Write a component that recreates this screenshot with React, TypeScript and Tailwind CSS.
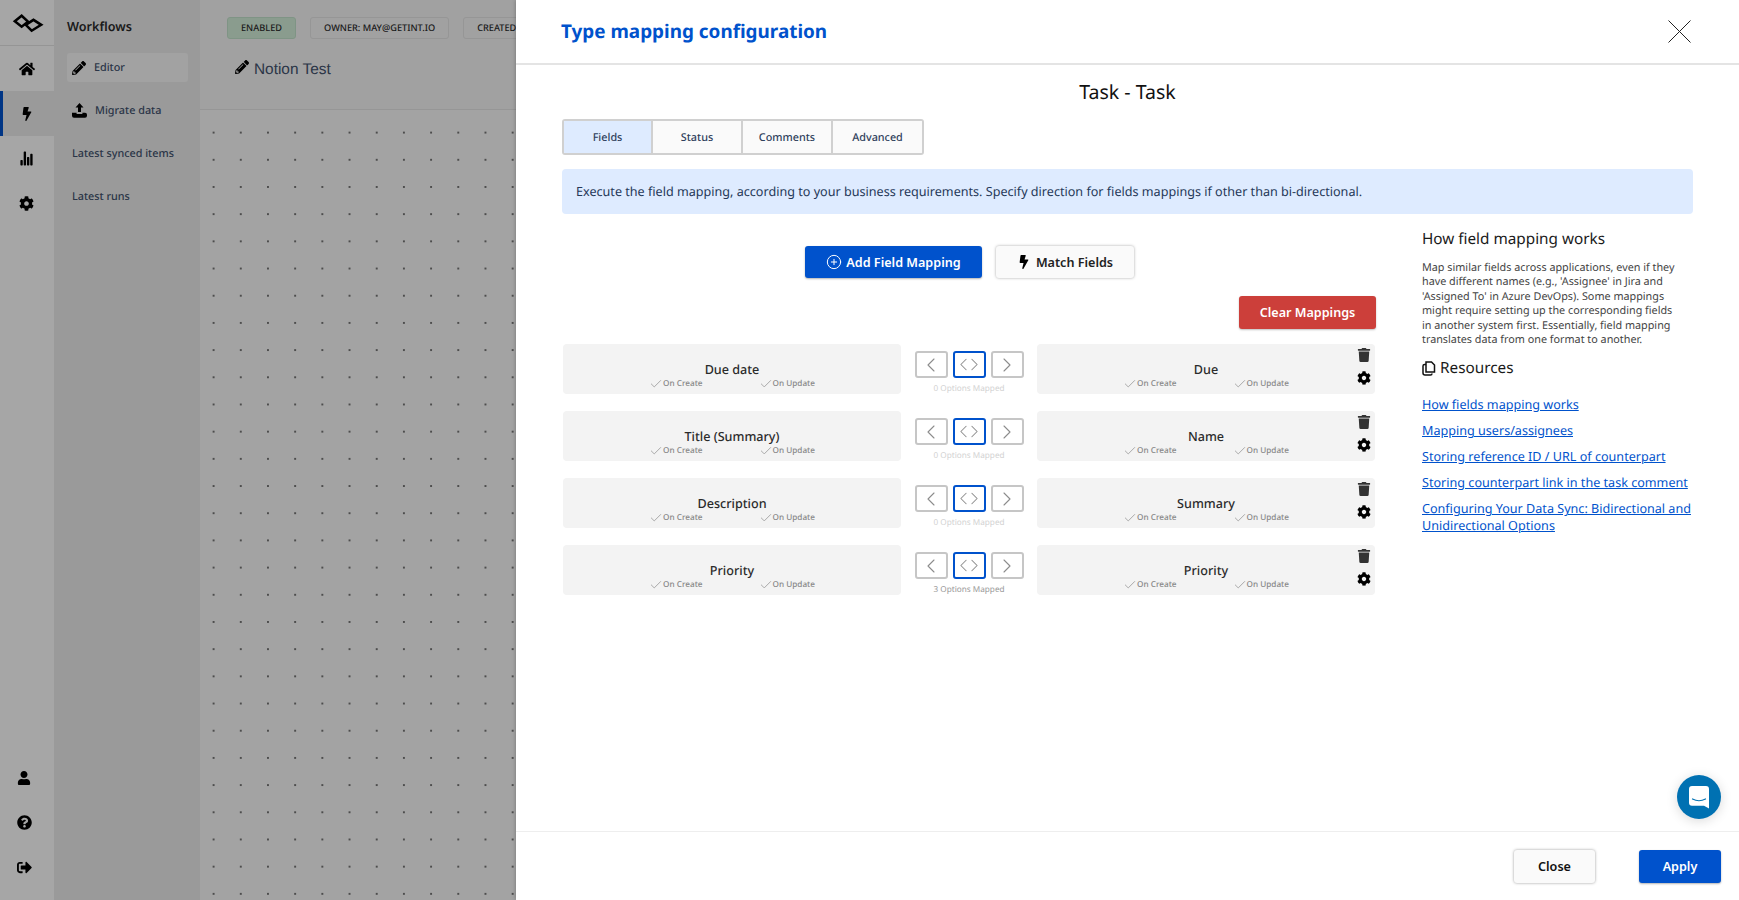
import React from "react";
import { Check, ChevronLeft, ChevronRight, PlusCircle } from "lucide-react";
import { FaBolt, FaCog, FaHome, FaPencilAlt, FaQuestionCircle, FaSignOutAlt, FaTrash, FaUser } from "react-icons/fa";
import { IoStatsChart } from "react-icons/io5";

const rows = [
  { left: "Due date", right: "Due", mapped: "0 Options Mapped", active: false },
  { left: "Title (Summary)", right: "Name", mapped: "0 Options Mapped", active: false },
  { left: "Description", right: "Summary", mapped: "0 Options Mapped", active: false },
  { left: "Priority", right: "Priority", mapped: "3 Options Mapped", active: true },
];

const links = [
  "How fields mapping works",
  "Mapping users/assignees",
  "Storing reference ID / URL of counterpart",
  "Storing counterpart link in the task comment",
  "Configuring Your Data Sync: Bidirectional and Unidirectional Options",
];

function Logo() {
  return (
    <svg width="32" height="20" viewBox="0 0 34 22" fill="none" stroke="#000" strokeWidth="2.8" strokeLinejoin="miter">
      <path d="M2.5 9 L10 3 L17 9.5 L10 15 Z" />
      <path d="M14.5 13 L23 7.5 L31.5 13 L21 19.5 Z" />
    </svg>
  );
}

function UploadTray() {
  return (
    <svg width="15" height="15" viewBox="0 0 15 15" fill="#000">
      <path d="M7.5 0 L11.5 4.4 H9 V9 H6 V4.4 H3.5 Z" />
      <path d="M0 9.8 H4.6 V11 H10.4 V9.8 H13 A2 2 0 0 1 15 11.8 V12.8 A2 2 0 0 1 13 14.8 H2 A2 2 0 0 1 0 12.8 V11.8 A2 2 0 0 1 0 9.8 Z" />
    </svg>
  );
}

function ResourcesIcon() {
  return (
    <svg width="14" height="15" viewBox="0 0 14 15" fill="none" stroke="#111" strokeWidth="1.5">
      <path d="M4 1 H9.5 L12.5 4 V11 H4 Z" />
      <path d="M4 3.5 H2.6 A1.6 1.6 0 0 0 1 5.1 V12 A2 2 0 0 0 3 14 H8.5 A1.6 1.6 0 0 0 10 12.4" />
    </svg>
  );
}

function ChatIcon() {
  return (
    <svg width="20" height="23" viewBox="0 0 20 23">
      <path d="M3 0 H17 A3 3 0 0 1 20 3 V22.5 L15 19.8 H3 A3 3 0 0 1 0 16.8 V3 A3 3 0 0 1 3 0 Z" fill="#fff" />
      <path d="M3.5 13 Q10 16.5 16.5 13" stroke="#0071b2" strokeWidth="1.2" fill="none" strokeLinecap="round" />
    </svg>
  );
}

function Checks() {
  return (
    <div className="flex justify-center gap-[56px] text-[8.2px] leading-[11px] font-medium text-[#888]">
      {["On Create", "On Update"].map((t) => (
        <span key={t} className="flex items-center">
          <Check size={14} strokeWidth={1.7} className="-my-[2px] text-[#a8a8a8]" />
          {t}
        </span>
      ))}
    </div>
  );
}

function FieldCard({ name, actions }: { name: string; actions?: boolean }) {
  return (
    <div className="relative h-[50px] w-[338px] rounded-[4px] bg-[#f3f3f3] pt-[18px]">
      <div className="text-center text-[12.6px] leading-[16px] font-medium text-[#2b2b2b]">{name}</div>
      <Checks />
      {actions && (
        <div className="absolute top-[4px] right-[4px] flex flex-col items-center gap-[9px]">
          <FaTrash size={14} className="text-[#333]" />
          <FaCog size={14} className="text-black" />
        </div>
      )}
    </div>
  );
}

function DirButton({ active, children }: { active?: boolean; children: React.ReactNode }) {
  return (
    <div
      className={`flex h-[27px] w-[33px] items-center justify-center rounded-[3px] border-2 bg-white text-[#8c8c8c] ${
        active ? "border-[#0052cc]" : "border-[#c6c6c6]"
      }`}
    >
      {children}
    </div>
  );
}

function Row({ left, right, mapped, active }: (typeof rows)[number]) {
  return (
    <div className="flex items-start">
      <FieldCard name={left} />
      <div className="flex w-[136px] flex-col items-center pt-[7px]">
        <div className="flex gap-[5px]">
          <DirButton>
            <ChevronLeft size={24} strokeWidth={1.1} className="shrink-0" />
          </DirButton>
          <DirButton active>
            <span className="flex">
              <ChevronLeft size={21} strokeWidth={1.2} className="-mr-[5px] shrink-0" />
              <ChevronRight size={21} strokeWidth={1.2} className="-ml-[5px] shrink-0" />
            </span>
          </DirButton>
          <DirButton>
            <ChevronRight size={24} strokeWidth={1.1} className="shrink-0" />
          </DirButton>
        </div>
        <div className={`mt-[5px] text-[8.2px] leading-[11px] ${active ? "text-[#999]" : "text-[#d2d2d2]"}`}>{mapped}</div>
      </div>
      <FieldCard name={right} actions />
    </div>
  );
}

function RailItem({ children, active }: { children: React.ReactNode; active?: boolean }) {
  return (
    <div
      className={`flex h-[45px] items-center justify-center border-l-[3px] pr-[4px] ${
        active ? "border-[#0052cc] bg-[#ededed]" : "border-transparent"
      }`}
    >
      {children}
    </div>
  );
}

export default function App() {
  return (
    <div className="relative flex h-[900px] w-full overflow-hidden bg-white font-['Noto_Sans',sans-serif] [text-rendering:geometricPrecision]">
      {/* rail */}
      <div className="flex w-[54px] shrink-0 flex-col justify-between bg-white">
        <div>
          <div className="flex h-[46px] items-center justify-center border-b border-[#e5e5e5] pl-[1px]">
            <Logo />
          </div>
          <RailItem>
            <FaHome size={16} />
          </RailItem>
          <RailItem active>
            <FaBolt size={14} />
          </RailItem>
          <RailItem>
            <IoStatsChart size={15} />
          </RailItem>
          <RailItem>
            <FaCog size={15} />
          </RailItem>
        </div>
        <div className="flex flex-col items-center pr-[6px] pb-[10px]">
          <div className="flex h-[45px] items-center">
            <FaUser size={14} />
          </div>
          <div className="flex h-[45px] items-center">
            <FaQuestionCircle size={15} />
          </div>
          <div className="flex h-[45px] items-center">
            <FaSignOutAlt size={15} />
          </div>
        </div>
      </div>

      {/* sidebar */}
      <div className="flex w-[146px] shrink-0 flex-col bg-[#ededed] pt-[17px] pl-[13px]">
        <div className="text-[12.6px] leading-[20px] font-semibold text-[#2a2a2a]">Workflows</div>
        <div className="mt-[16px] flex h-[29px] w-[121px] items-center gap-[8px] rounded-[3px] bg-[#f9f9f9] pl-[5px] text-[10.8px] font-medium text-[#42526e]">
          <FaPencilAlt size={14} className="text-black" />
          <span className="pt-[2px]">Editor</span>
        </div>
        <div className="mt-[14px] flex h-[29px] items-center gap-[8px] pl-[5px] text-[10.8px] font-medium text-[#42526e]">
          <UploadTray />
          <span className="pt-[2px]">Migrate data</span>
        </div>
        <div className="mt-[14px] flex h-[29px] items-center pt-[2px] pl-[5px] text-[10.8px] font-medium text-[#42526e]">Latest synced items</div>
        <div className="mt-[14px] flex h-[29px] items-center pt-[2px] pl-[5px] text-[10.8px] font-medium text-[#42526e]">Latest runs</div>
      </div>

      {/* canvas */}
      <div className="flex min-w-0 flex-1 flex-col">
        <div className="h-[110px] shrink-0 border-b border-[#e6e6e6] bg-[#f7f7f7] pt-[17px] pl-[27px]">
          <div className="flex gap-[14px] text-[9.2px] leading-[20px] font-medium whitespace-nowrap text-[#2b2b2b]">
            <span className="rounded-[3px] border border-[#c4e4cc] bg-[#d5f0db] px-[13px]">ENABLED</span>
            <span className="rounded-[3px] border border-[#e6e6e6] px-[13px]">OWNER: MAY@GETINT.IO</span>
            <span className="rounded-[3px] border border-[#e6e6e6] px-[13px]">CREATED: 2024-03-11</span>
          </div>
          <div className="mt-[19px] ml-[8px] flex items-center gap-[5px] font-['Liberation_Sans',sans-serif] text-[15.4px] text-[#42526e]">
            <FaPencilAlt size={14} className="-mt-[5px] text-black" />
            Notion Test
          </div>
        </div>
        <div className="flex-1 bg-[#fbfbfb] bg-[radial-gradient(circle,#777_0.7px,transparent_1px)] bg-[size:27.2px_27.2px] bg-[position:0px_9px]" />
      </div>

      {/* dim overlay */}
      <div className="absolute inset-0 bg-black/35" />

      {/* modal */}
      <div className="absolute top-0 right-0 bottom-0 flex w-[1223px] flex-col bg-white text-black shadow-[0_0_4px_rgba(0,0,0,0.3)]">
        <div className="flex h-[65px] shrink-0 items-center justify-between border-b-2 border-[#e4e4e4] pr-[48px] pl-[45px]">
          <div className="text-[18.9px] font-bold text-[#0052cc]">Type mapping configuration</div>
          <svg width="23" height="23" viewBox="0 0 23 23" stroke="#222" strokeWidth="1">
            <path d="M0.5 0.5 L22.5 22.5 M22.5 0.5 L0.5 22.5" />
          </svg>
        </div>

        <div className="flex min-h-0 flex-1 flex-col pr-[46px] pl-[46px]">
          <div className="mt-[13px] text-center text-[19.5px] leading-[28px] text-[#111]">Task - Task</div>
          <div className="mt-[13px] flex h-[36px] w-fit overflow-hidden rounded-[3px] border-2 border-[#d0d0d0] text-[10.8px] font-medium text-[#2f3f5c]">
            <div className="flex w-[87px] items-center justify-center bg-[#deebff] pt-[2px]">Fields</div>
            <div className="flex w-[90px] items-center justify-center border-l-2 border-[#d0d0d0] bg-[#fafafa] pt-[2px]">Status</div>
            <div className="flex w-[90px] items-center justify-center border-l-2 border-[#d0d0d0] bg-[#fafafa] pt-[2px]">Comments</div>
            <div className="flex w-[91px] items-center justify-center border-l-2 border-[#d0d0d0] bg-[#fafafa] pt-[2px]">Advanced</div>
          </div>
          <div className="mt-[14px] flex h-[45px] items-center rounded-[4px] bg-[#deebff] pt-[1px] pl-[14px] text-[12.6px] text-[#253858]">
            Execute the field mapping, according to your business requirements. Specify direction for fields mappings if other than bi-directional.
          </div>

          <div className="flex gap-[46px]">
            <div className="w-[814px] shrink-0 pl-[1px]">
              <div className="mt-[32px] flex justify-center gap-[14px]">
                <button className="flex h-[32px] w-[177px] items-center justify-center gap-[4px] rounded-[3px] bg-[#0052cc] text-[12.6px] font-semibold text-white shadow-[0_1px_2px_rgba(0,0,0,0.3)]">
                  <PlusCircle size={16} strokeWidth={1.5} />
                  <span className="pt-[2px]">Add Field Mapping</span>
                </button>
                <button className="flex h-[32px] w-[138px] items-center justify-center gap-[5px] rounded-[3px] bg-[#fafafa] text-[12.6px] font-semibold text-[#222] shadow-[0_0_3px_rgba(0,0,0,0.35)]">
                  <FaBolt size={14} className="text-black" />
                  <span className="pt-[2px]">Match Fields</span>
                </button>
              </div>
              <div className="mt-[18px] flex justify-end">
                <button className="h-[33px] w-[137px] rounded-[3px] bg-[#cc3f3a] pt-[1px] text-[12.6px] font-semibold text-white shadow-[0_1px_2px_rgba(0,0,0,0.25)]">
                  Clear Mappings
                </button>
              </div>
              <div className="mt-[15px] flex flex-col gap-[17px]">
                {rows.map((r) => (
                  <Row key={r.left} {...r} />
                ))}
              </div>
            </div>

            <div className="w-[271px] shrink-0 pt-[13px]">
              <div className="text-[15.3px] leading-[24px] text-[#1a1a1a]">How field mapping works</div>
              <p className="mt-[10px] w-[262px] text-[10.8px] leading-[14.4px] text-[#444]">
                Map similar fields across applications, even if they have different names (e.g., 'Assignee' in Jira and 'Assigned To' in Azure DevOps). Some mappings might require setting up the corresponding fields in another system first. Essentially, field mapping translates data from one format to another.
              </p>
              <div className="mt-[9px] flex items-center gap-[4px] text-[15.3px] leading-[24px] text-[#1a1a1a]">
                <ResourcesIcon />
                Resources
              </div>
              <div className="mt-[16px] flex flex-col gap-[9px]">
                {links.map((l) => (
                  <a key={l} className="text-[12.6px] leading-[17px] text-[#0052cc] underline">
                    {l}
                  </a>
                ))}
              </div>
            </div>
          </div>
        </div>

        <div className="flex h-[69px] shrink-0 items-start justify-end gap-[44px] border-t border-[#eeeeee] pt-[18px] pr-[18px]">
          <button className="h-[33px] w-[81px] rounded-[3px] bg-[#fafafa] pt-[1px] text-[12.6px] font-semibold text-[#111] shadow-[0_0_3px_rgba(0,0,0,0.4)]">
            Close
          </button>
          <button className="h-[33px] w-[82px] rounded-[3px] bg-[#0052cc] pt-[1px] text-[12.6px] font-semibold text-white shadow-[0_1px_2px_rgba(0,0,0,0.3)]">
            Apply
          </button>
        </div>

        <div className="absolute right-[18px] bottom-[81px] flex h-[44px] w-[44px] items-center justify-center rounded-full bg-[#0071b2] pt-[1px] shadow-[0_2px_12px_rgba(0,0,0,0.15)]">
          <ChatIcon />
        </div>
      </div>
    </div>
  );
}
